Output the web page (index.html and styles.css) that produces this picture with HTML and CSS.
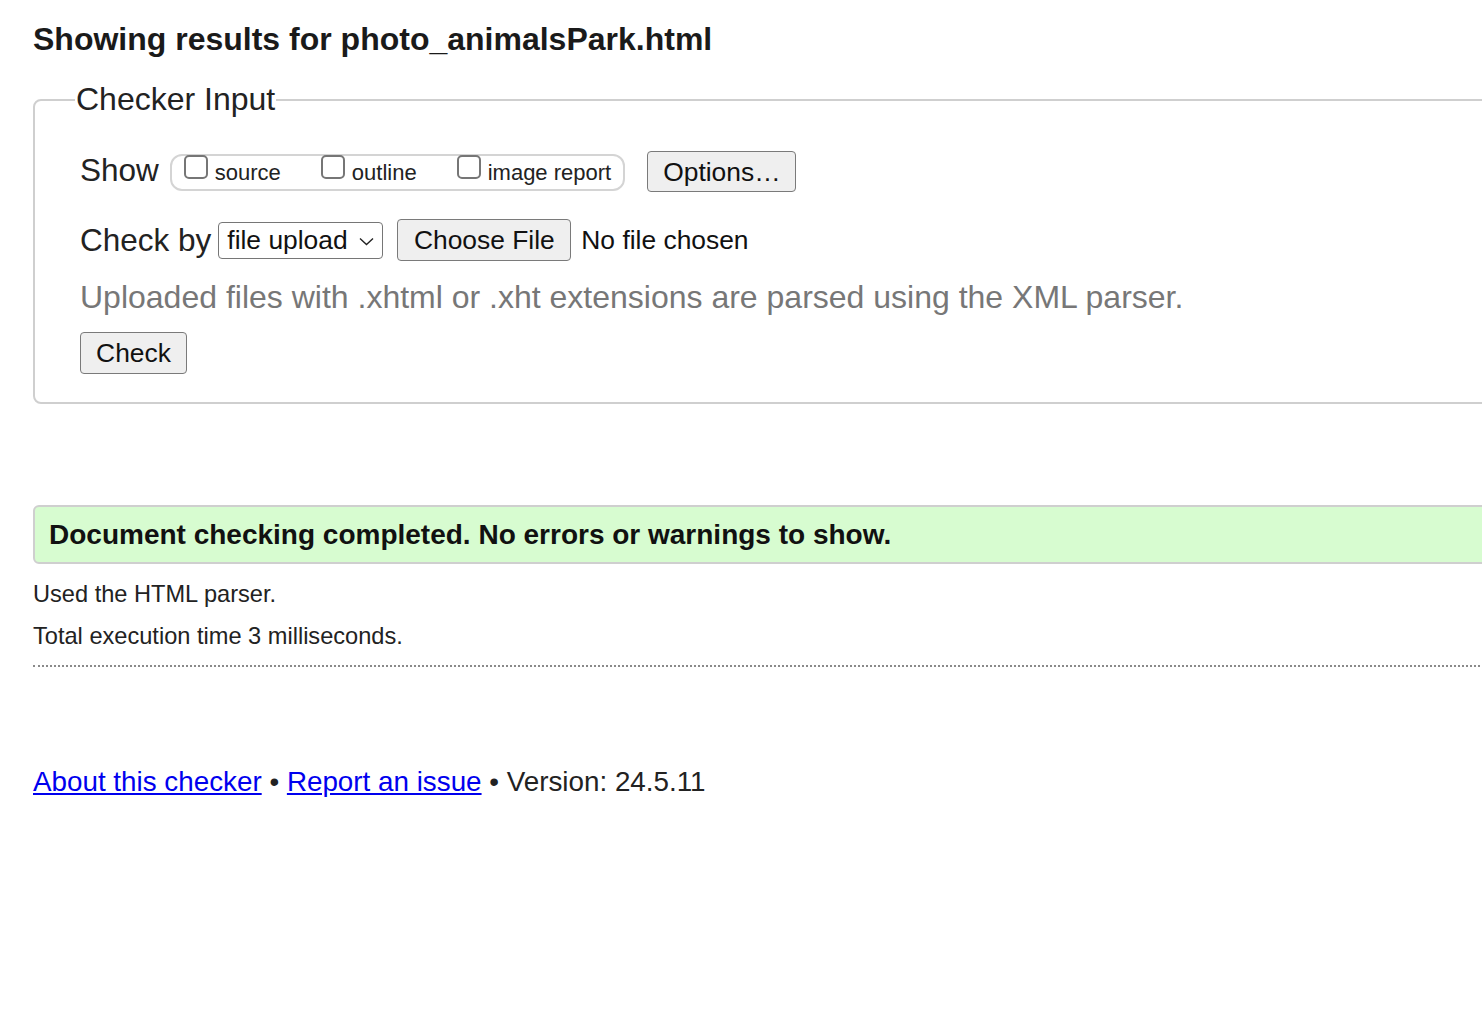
FILE: index.html
```html
<!DOCTYPE html>
<html lang="en">
<head>
<meta charset="utf-8">
<title>Showing results for photo_animalsPark.html - Nu Html Checker</title>
<link rel="stylesheet" href="styles.css">
</head>
<body>
<div class="page">
  <h2 class="title">Showing results for photo_animalsPark.html</h2>
  <fieldset class="checker">
    <legend class="legend">Checker Input</legend>
    <div class="row show-row">
      <span class="lbl">Show</span>
      <div class="opts">
        <label class="opt"><span class="cb"></span><span class="opt-text">source</span></label>
        <label class="opt"><span class="cb"></span><span class="opt-text">outline</span></label>
        <label class="opt"><span class="cb"></span><span class="opt-text">image report</span></label>
      </div>
      <button class="btn btn-options">Options…</button>
    </div>
    <div class="row by-row">
      <span class="lbl">Check by</span>
      <div class="select">file upload<svg class="chev" width="15" height="9" viewBox="0 0 15 9"><polyline points="1,1.5 7.5,7.5 14,1.5" fill="none" stroke="#222" stroke-width="1.4"/></svg></div>
      <button class="btn btn-file">Choose File</button>
      <span class="nofile">No file chosen</span>
    </div>
    <p class="info">Uploaded files with .xhtml or .xht extensions are parsed using the XML parser.</p>
    <button class="btn btn-check">Check</button>
  </fieldset>
  <div class="success">Document checking completed. No errors or warnings to show.</div>
  <p class="detail detail-first">Used the HTML parser.</p>
  <p class="detail">Total execution time 3 milliseconds.</p>
  <div class="dots"></div>
  <p class="footer"><a href="#">About this checker</a> • <a href="#">Report an issue</a> • Version: 24.5.11</p>
</div>
</body>
</html>
```

FILE: styles.css
```css
html, body {
  margin: 0;
  padding: 0;
  background: #ffffff;
  overflow: hidden;
}
body {
  font-family: "Liberation Sans", Arial, sans-serif;
  color: #222;
}
.page {
  width: 1600px;
  padding-left: 33px;
  box-sizing: border-box;
}
.title {
  margin: 0;
  padding-top: 21px;
  font-size: 32px;
  line-height: 37px;
  font-weight: bold;
  color: #1a1a1a;
}
.checker {
  margin: 23px 0 0 0;
  border: 2px solid #cfcfcf;
  border-radius: 8px;
  padding: 33px 0 28px 45px;
  min-width: 0;
}
.legend {
  margin-left: -5px;
  padding: 0 1px;
  font-size: 32px;
  line-height: 37px;
  color: #222;
}
.row {
  display: flex;
  align-items: center;
}
.show-row {
  height: 41px;
}
.lbl {
  font-size: 31.5px;
  line-height: 37px;
  color: #222;
}
.show-row .lbl {
  margin-top: -2px;
}
.opts {
  display: flex;
  align-items: flex-start;
  margin-left: 11px;
  height: 37px;
  box-sizing: border-box;
  border: 2px solid #d4d4d4;
  border-radius: 12px;
  padding: 0 12px 0 12px;
  margin-top: 2px;
}
.opt {
  display: flex;
  align-items: flex-start;
  font-size: 22px;
  line-height: 26px;
  color: #222;
  margin-right: 40px;
}
.opt:last-child {
  margin-right: 0;
}
.opt-text {
  margin-top: 4px;
}
.cb {
  display: inline-block;
  width: 24px;
  height: 24px;
  box-sizing: border-box;
  border: 2px solid #767676;
  border-radius: 5px;
  background: #fff;
  margin-right: 7px;
  margin-top: -1px;
}
.btn {
  font-family: "Liberation Sans", Arial, sans-serif;
  font-size: 26.4px;
  line-height: 30px;
  color: #111;
  background: #efefef;
  border: 1.5px solid #7a7a7a;
  border-radius: 4px;
  padding: 0 15px;
  box-sizing: border-box;
  margin: 0;
}
.btn-options {
  margin-left: 22px;
  width: 149px;
  height: 41px;
}
.by-row {
  margin-top: 27px;
  height: 42px;
}
.select {
  display: flex;
  align-items: center;
  margin-left: 7px;
  height: 37px;
  width: 165px;
  box-sizing: border-box;
  border: 1.5px solid #767676;
  border-radius: 4px;
  background: #fff;
  padding-left: 8px;
  font-size: 26.4px;
  color: #111;
}
.chev {
  margin-left: 11px;
  margin-top: 2px;
}
.btn-file {
  margin-left: 14px;
  width: 174px;
  height: 42px;
}
.nofile {
  margin-left: 10px;
  font-size: 26.4px;
  color: #111;
}
.info {
  margin: 18px 0 0 0;
  font-size: 32px;
  line-height: 37px;
  color: #777;
}
.btn-check {
  display: block;
  margin-top: 16px;
  width: 107px;
  height: 42px;
}
.success {
  margin-top: 101px;
  height: 59px;
  box-sizing: border-box;
  border: 2px solid #cfcfcf;
  border-radius: 6px;
  background: #d7fcd0;
  padding-left: 14px;
  font-size: 28px;
  line-height: 55px;
  font-weight: bold;
  color: #111;
}
.detail {
  margin: 15px 0 0 0;
  font-size: 23.6px;
  line-height: 27px;
  color: #222;
}
.detail-first {
  margin-top: 17px;
}
.dots {
  margin-top: 15px;
  border-top: 2px dotted #8a8a8a;
}
.footer {
  margin: 99px 0 0 0;
  font-size: 27.8px;
  line-height: 32px;
  color: #222;
}
.footer a {
  color: #0000ee;
  text-decoration: underline;
}
```
